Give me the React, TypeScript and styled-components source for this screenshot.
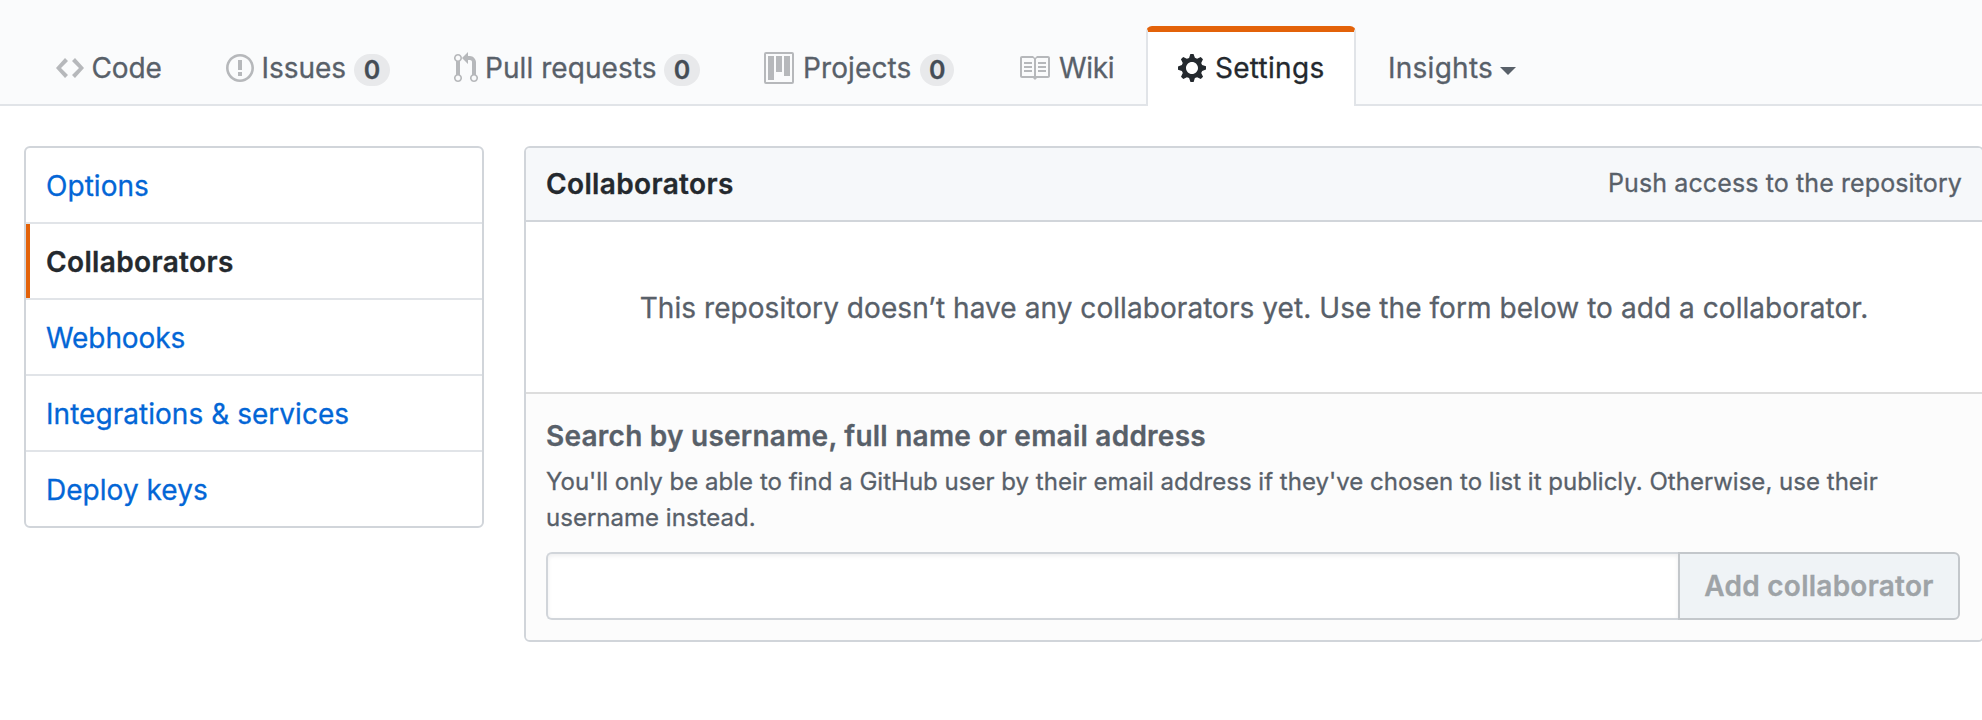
import React from 'react';
import styled, { createGlobalStyle, css } from 'styled-components';

const GlobalStyle = createGlobalStyle`
  *, *::before, *::after { box-sizing: border-box; }
  body {
    margin: 0;
    background: #fff;
    color: #24292e;
    font-family: Inter, "Liberation Sans", sans-serif;
    font-size: 28px;
    line-height: 42px;
    -webkit-text-stroke-width: 0.3px;
  }
`;

const Page = styled.div`
  min-height: 720px;
  overflow: hidden;
`;

const RepoNav = styled.nav`
  display: flex;
  align-items: flex-end;
  height: 106px;
  padding-left: 24px;
  background: #fafbfc;
  box-shadow: inset 0 -2px 0 #e1e4e8;
`;

const Tab = styled.a<{ $width: number; $gap?: number; $tracking?: number; $active?: boolean }>`
  display: flex;
  align-items: flex-start;
  gap: ${p => p.$gap ?? 7}px;
  width: ${p => p.$width}px;
  height: 80px;
  padding: 15px 30px 0;
  border: 2px solid transparent;
  border-top-width: 6px;
  border-bottom: 0;
  border-radius: 6px 6px 0 0;
  color: #586069;
  letter-spacing: ${p => p.$tracking ?? 0.1}px;
  white-space: nowrap;
  text-decoration: none;
  ${p => p.$active && css`
    background: #fff;
    border-color: #e36209 #e1e4e8 transparent;
    color: #24292e;
  `}
`;

const Octicon = styled.svg<{ $active?: boolean }>`
  flex: none;
  margin-top: 5px;
  fill: ${p => (p.$active ? '#24292e' : 'rgba(27, 31, 35, 0.3)')};
`;

const Counter = styled.span`
  display: flex;
  align-items: center;
  justify-content: center;
  width: 36px;
  height: 32px;
  margin: 7px 0 0 auto;
  border-radius: 40px;
  background: rgba(27, 31, 35, 0.08);
  color: #444d56;
  font-size: 25px;
  font-weight: 600;
  line-height: 32px;
  letter-spacing: 0;
`;

const Caret = styled.span`
  margin-top: 20px;
  border: 8px solid transparent;
  border-top-color: currentColor;
  border-bottom: 0;
`;

const Content = styled.main`
  display: flex;
  align-items: flex-start;
  gap: 40px;
  padding: 40px 0 0 24px;
`;

const Menu = styled.nav`
  flex: none;
  width: 460px;
  border: 2px solid #d1d5da;
  border-radius: 6px;
  overflow: hidden;
`;

const MenuItem = styled.a<{ $selected?: boolean; $tracking?: number }>`
  display: block;
  height: 76px;
  padding: 17px 20px 0;
  border-bottom: 2px solid #e1e4e8;
  color: #0366d6;
  letter-spacing: ${p => p.$tracking ?? 0.04}px;
  text-decoration: none;
  &:last-child {
    border-bottom-color: transparent;
    height: 76px;
    margin-bottom: -2px;
  }
  ${p => p.$selected && css`
    background: linear-gradient(#e36209, #e36209) left / 4px 100% no-repeat;
    color: #24292e;
    font-weight: 600;
  `}
`;

const Panel = styled.section`
  flex: none;
  width: 1460px;
  border: 2px solid #d1d5da;
  border-radius: 6px;
  overflow: hidden;
`;

const PanelHeader = styled.header`
  display: flex;
  justify-content: space-between;
  height: 74px;
  padding: 15px 20px 0;
  border-bottom: 2px solid #d1d5da;
  background: #f6f8fa;
`;

const PanelTitle = styled.h3`
  margin: 0;
  font-size: 28px;
  font-weight: 600;
  letter-spacing: 0.36px;
`;

const AccessNote = styled.span`
  color: #586069;
  font-size: 25px;
  line-height: 40px;
  letter-spacing: 0.11px;
`;

const EmptyMessage = styled.p`
  margin: 0;
  padding: 65px 20px 63px;
  color: #586069;
  letter-spacing: 0.06px;
  text-align: center;
  white-space: nowrap;
`;

const PanelFooter = styled.form`
  display: flex;
  flex-direction: column;
  padding: 21px 22px 20px 20px;
  border-top: 2px solid #ddd;
  background: #fcfcfc;
  color: #586069;
`;

const FieldLabel = styled.label`
  margin-bottom: 7px;
  font-weight: 600;
  letter-spacing: 0.24px;
`;

const FieldNote = styled.p`
  margin: 0 0 16px;
  font-size: 24px;
  line-height: 36px;
  letter-spacing: 0.02px;
`;

const InputGroup = styled.div`
  display: flex;
  height: 68px;
`;

const TextInput = styled.input`
  flex: 1;
  min-width: 0;
  padding: 0 16px;
  border: 2px solid #d1d5da;
  border-right: 0;
  border-radius: 6px 0 0 6px;
  background: #fff;
  box-shadow: inset 0 2px 4px rgba(27, 31, 35, 0.075);
  font: inherit;
  outline: none;
`;

const AddButton = styled.button`
  width: 282px;
  padding: 0;
  border: 2px solid #c3c7cb;
  border-radius: 0 6px 6px 0;
  background: #eff3f6;
  color: #9ea3a7;
  font: inherit;
  font-weight: 600;
  letter-spacing: 0.25px;
  white-space: nowrap;
`;

const icons = {
  code: { width: 14, d: 'M9.5 3L8 4.5 11.5 8 8 11.5 9.5 13 14 8 9.5 3zm-5 0L0 8l4.5 5L6 11.5 2.5 8 6 4.5 4.5 3z' },
  issue: { width: 14, d: 'M7 2.3c3.14 0 5.7 2.56 5.7 5.7s-2.56 5.7-5.7 5.7A5.71 5.71 0 0 1 1.3 8c0-3.14 2.56-5.7 5.7-5.7zM7 1C3.14 1 0 4.14 0 8s3.14 7 7 7 7-3.14 7-7-3.14-7-7-7zm1 3H6v5h2V4zm0 6H6v2h2v-2z' },
  pull: { width: 12, d: 'M11 11.28V5c-.03-.78-.34-1.47-.94-2.06C9.46 2.35 8.78 2.03 8 2H7V0L4 3l3 3V4h1c.27.02.48.11.69.31.21.2.3.42.31.69v6.28A1.993 1.993 0 0 0 10 15a1.993 1.993 0 0 0 1-3.72zm-1 2.92c-.66 0-1.2-.55-1.2-1.2 0-.65.55-1.2 1.2-1.2.65 0 1.2.55 1.2 1.2 0 .65-.55 1.2-1.2 1.2zM4 3c0-1.11-.89-2-2-2a1.993 1.993 0 0 0-1 3.72v6.56A1.993 1.993 0 0 0 2 15a1.993 1.993 0 0 0 1-3.72V4.72c.59-.34 1-.98 1-1.72zm-.8 10c0 .66-.55 1.2-1.2 1.2-.65 0-1.2-.55-1.2-1.2 0-.65.55-1.2 1.2-1.2.65 0 1.2.55 1.2 1.2zM2 4.2C1.34 4.2.8 3.65.8 3c0-.65.55-1.2 1.2-1.2.65 0 1.2.55 1.2 1.2 0 .65-.55 1.2-1.2 1.2z' },
  project: { width: 15, d: 'M10 12h3V2h-3v10zm-4-2h3V2H6v8zm-4 4h3V2H2v12zm-1 1h13V1H1v14zM14 0H1a1 1 0 0 0-1 1v14a1 1 0 0 0 1 1h13a1 1 0 0 0 1-1V1a1 1 0 0 0-1-1z' },
  book: { width: 16, d: 'M3 5h4v1H3V5zm0 3h4V7H3v1zm0 2h4V9H3v1zm11-5h-4v1h4V5zm0 2h-4v1h4V7zm0 2h-4v1h4V9zm2-6v9c0 .55-.45 1-1 1H9.5l-1 1-1-1H2c-.55 0-1-.45-1-1V3c0-.55.45-1 1-1h5.5l1 1 1-1H15c.55 0 1 .45 1 1zm-8 .5L7.5 3H2v9h6V3.5zm7-.5H9.5l-.5.5V12h6V3z' },
  gear: { width: 14, d: 'M14 8.77v-1.6l-1.94-.64-.45-1.09.88-1.84-1.13-1.13-1.81.91-1.09-.45-.69-1.92h-1.6l-.63 1.94-1.11.45-1.84-.88-1.13 1.13.91 1.81-.45 1.09L0 7.23v1.59l1.94.64.45 1.09-.88 1.84 1.13 1.13 1.81-.91 1.09.45.69 1.92h1.59l.63-1.94 1.11-.45 1.84.88 1.13-1.13-.92-1.81.47-1.09L14 8.75v.02zM7 11c-1.66 0-3-1.34-3-3s1.34-3 3-3 3 1.34 3 3-1.34 3-3 3z' },
};

type IconName = keyof typeof icons;

const Icon = ({ name, active }: { name: IconName; active?: boolean }) => {
  const { width, d } = icons[name];
  return (
    <Octicon $active={active} width={width * 2} height={32} viewBox={`0 0 ${width} 16`} aria-hidden="true">
      <path fillRule="evenodd" d={d} />
    </Octicon>
  );
};

interface TabInfo {
  label: string;
  width: number;
  icon?: IconName;
  gap?: number;
  tracking?: number;
  count?: number;
  active?: boolean;
  caret?: boolean;
}

const tabs: TabInfo[] = [
  { label: 'Code', icon: 'code', width: 170, gap: 7.5, tracking: -0.1 },
  { label: 'Issues', icon: 'issue', width: 228, gap: 7.5, tracking: -0.05, count: 0 },
  { label: 'Pull requests', icon: 'pull', width: 310, tracking: 0.06, count: 0 },
  { label: 'Projects', icon: 'project', width: 254, gap: 9, tracking: 0.12, count: 0 },
  { label: 'Wiki', icon: 'book', width: 160, gap: 9, tracking: -0.3 },
  { label: 'Settings', icon: 'gear', width: 210, gap: 9, tracking: 0.28, active: true },
  { label: 'Insights', width: 192, gap: 7, tracking: 0.26, caret: true },
];

const menu = [
  { label: 'Options' },
  { label: 'Collaborators', selected: true, tracking: 0.36 },
  { label: 'Webhooks', tracking: -0.08 },
  { label: 'Integrations & services' },
  { label: 'Deploy keys' },
];

export default function App() {
  return (
    <Page>
      <GlobalStyle />
      <RepoNav>
        {tabs.map(t => (
          <Tab key={t.label} $width={t.width} $gap={t.gap} $tracking={t.tracking} $active={t.active}>
            {t.icon && <Icon name={t.icon} active={t.active} />}
            <span>{t.label}</span>
            {t.count !== undefined && <Counter>{t.count}</Counter>}
            {t.caret && <Caret />}
          </Tab>
        ))}
      </RepoNav>
      <Content>
        <Menu>
          {menu.map(m => (
            <MenuItem key={m.label} $selected={m.selected} $tracking={m.tracking}>
              {m.label}
            </MenuItem>
          ))}
        </Menu>
        <Panel>
          <PanelHeader>
            <PanelTitle>Collaborators</PanelTitle>
            <AccessNote>Push access to the repository</AccessNote>
          </PanelHeader>
          <EmptyMessage>
            This repository doesn’t have any collaborators yet. Use the form below to add a collaborator.
          </EmptyMessage>
          <PanelFooter>
            <FieldLabel htmlFor="collaborator">Search by username, full name or email address</FieldLabel>
            <FieldNote>
              You'll only be able to find a GitHub user by their email address if they've chosen to list it publicly.
              Otherwise, use their username instead.
            </FieldNote>
            <InputGroup>
              <TextInput id="collaborator" type="text" />
              <AddButton type="button" disabled>Add collaborator</AddButton>
            </InputGroup>
          </PanelFooter>
        </Panel>
      </Content>
    </Page>
  );
}
